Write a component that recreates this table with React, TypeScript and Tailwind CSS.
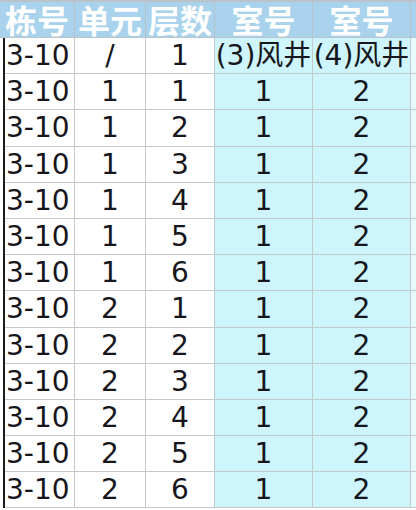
const headers = ['栋号', '单元', '层数', '室号', '室号'];

type Row = [string, string, string, string, string];

const rows: Row[] = [
  ['3-10', '/', '1', '(3)风井', '(4)风井'],
  ...[1, 2].flatMap((unit) =>
    [1, 2, 3, 4, 5, 6].map(
      (floor) => ['3-10', String(unit), String(floor), '1', '2'] as Row
    )
  ),
];

const cols = 'grid grid-cols-[69px_70px_68px_97px_97px_1fr] gap-x-px';

export default function App() {
  return (
    <div className="w-[416px] h-[510px] overflow-hidden bg-white font-['DejaVu_Sans','Noto_Sans_CJK_SC',sans-serif] text-[#16161c]">
      {/* header */}
      <div className="border-t-2 border-b border-[#b9c3c9] bg-[#b7c2c8]">
        <div className="grid grid-cols-[74px_70px_68px_97px_97px_1fr] gap-x-px">
          {headers.map((h, i) => (
            <div
              key={i}
              className="h-[35px] bg-[#a9d3ec] flex items-center justify-center whitespace-nowrap font-['Noto_Sans_CJK_SC',sans-serif] font-bold text-[32px] leading-[35px] text-white"
            >
              {h}
            </div>
          ))}
          <div className="bg-[#a9d3ec]" />
        </div>
      </div>

      {/* body */}
      <div className="pl-[3px]">
        <div className="border-l-2 border-[#1c1c1c] bg-[#c3c9cc]">
          {rows.map((r, ri) => (
            <div key={ri} className={`${cols} border-b border-[#c3c9cc]`}>
              {r.map((c, ci) => (
                <div
                  key={ci}
                  className={`h-[35.2px] flex items-center whitespace-nowrap text-[28px] leading-[35px] ${
                    ci === 0 ? 'justify-start pl-[1px]' : 'justify-center'
                  } ${ci >= 3 ? 'bg-[#cdf5fb]' : 'bg-white'}`}
                >
                  {c}
                </div>
              ))}
              <div className="bg-[#e6f9fc]" />
            </div>
          ))}
        </div>
      </div>
    </div>
  );
}
